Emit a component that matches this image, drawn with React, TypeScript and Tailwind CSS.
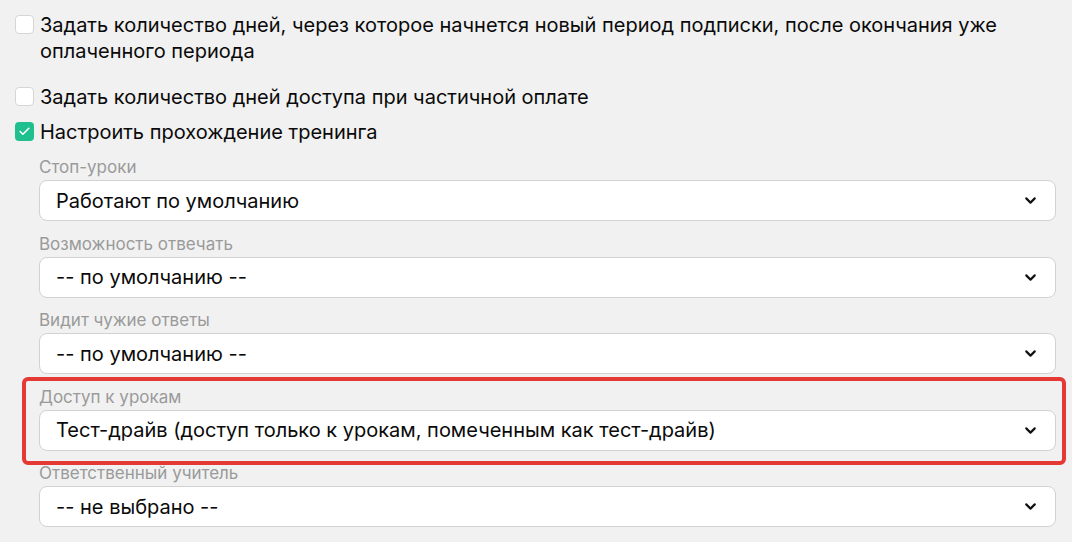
import { ChevronDown, Check } from 'lucide-react'

const font = { fontFamily: 'Inter, "Noto Sans", sans-serif' }

function CheckRow({ checked, children }: { checked?: boolean; children: React.ReactNode }) {
  return (
    <div className="flex items-start gap-[6px]">
      <div
        className={
          checked
            ? 'mt-[3px] flex h-[19px] w-[19px] shrink-0 items-center justify-center rounded-[4px] bg-[#1fbf8f]'
            : 'mt-[3px] h-[19px] w-[19px] shrink-0 rounded-[4px] border border-[#d6d6d6] bg-white'
        }
      >
        {checked && <Check className="h-[13px] w-[13px] text-white" strokeWidth={3} />}
      </div>
      <div className="text-[20px] leading-[26px] text-[#0a0a0a]">{children}</div>
    </div>
  )
}

function Field({ label, value }: { label: string; value: string }) {
  return (
    <div>
      <div className="mb-[2px] text-[17px] leading-[22px] text-[#9a9a9a]">{label}</div>
      <div className="flex h-[41px] items-center justify-between rounded-[8px] border border-[#d2d2d2] bg-white pl-[16px] pr-[16px]">
        <span className="text-[20px] text-[#0a0a0a]">{value}</span>
        <ChevronDown className="h-[17px] w-[17px] text-[#111]" strokeWidth={3} />
      </div>
    </div>
  )
}

export default function App() {
  return (
    <div className="h-[542px] w-[1072px] overflow-hidden bg-[#f1f1f1] pl-[15px] pr-[16px] pt-[12px]" style={font}>
      <CheckRow>
        Задать количество дней, через которое начнется новый период подписки, после окончания уже
        <br />
        оплаченного периода
      </CheckRow>
      <div className="mt-[20px]">
        <CheckRow>Задать количество дней доступа при частичной оплате</CheckRow>
      </div>
      <div className="mt-[9px]">
        <CheckRow checked>Настроить прохождение тренинга</CheckRow>
      </div>
      <div className="ml-[24px] mt-[11px] flex flex-col gap-[11.5px]">
        <Field label="Стоп-уроки" value="Работают по умолчанию" />
        <Field label="Возможность отвечать" value="-- по умолчанию --" />
        <Field label="Видит чужие ответы" value="-- по умолчанию --" />
        <div className="relative">
          <div className="pointer-events-none absolute -bottom-[14px] -left-[17px] -right-[10px] -top-[9px] rounded-[6px] border-[4px] border-[#e53935]" />
          <Field label="Доступ к урокам" value="Тест-драйв (доступ только к урокам, помеченным как тест-драйв)" />
        </div>
        <Field label="Ответственный учитель" value="-- не выбрано --" />
      </div>
    </div>
  )
}
